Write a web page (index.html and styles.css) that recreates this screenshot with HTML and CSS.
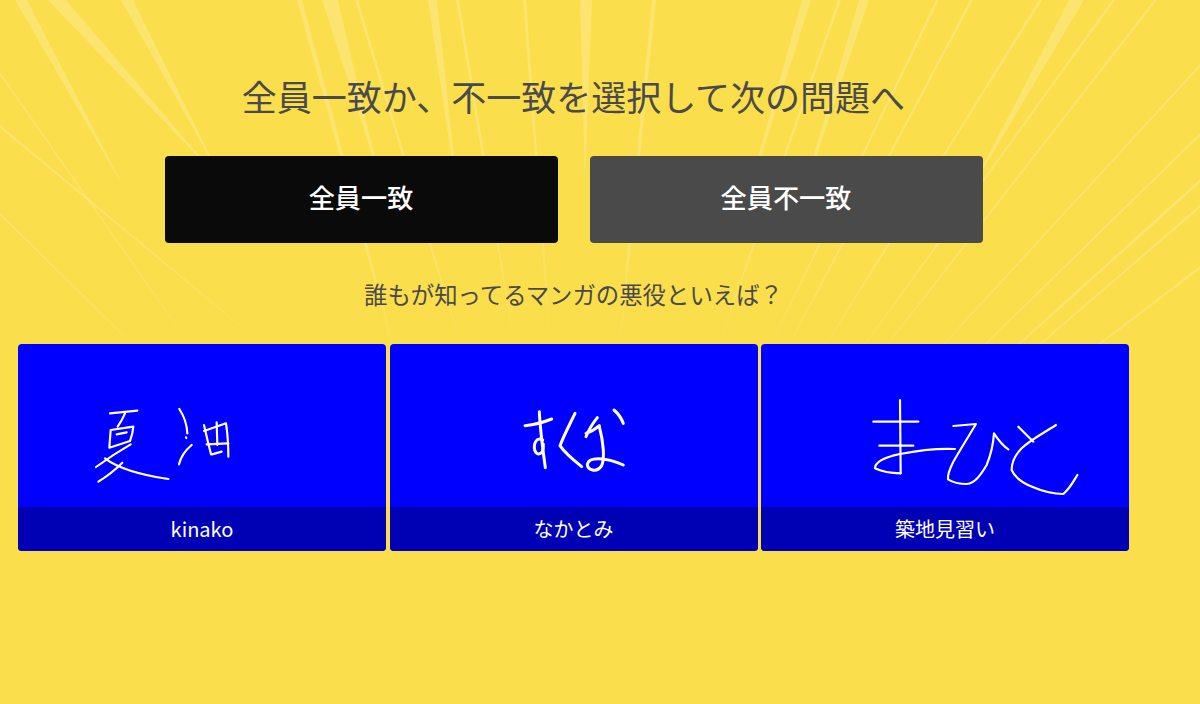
FILE: index.html
```html
<!DOCTYPE html>
<html lang="ja">
<head>
<meta charset="utf-8">
<title>全員一致</title>
<link rel="stylesheet" href="styles.css">
</head>
<body>
<svg class="rays" viewBox="0 0 1200 704" aria-hidden="true">
  <defs>
    <radialGradient id="fade" gradientUnits="userSpaceOnUse" cx="0" cy="0" r="1" gradientTransform="translate(580 740) scale(1500 850)">
      <stop offset="0.45" stop-color="#fff" stop-opacity="0"/>
      <stop offset="0.6" stop-color="#fff" stop-opacity="1"/>
    </radialGradient>
    <mask id="raymask" maskUnits="userSpaceOnUse" x="0" y="0" width="1200" height="704">
      <rect width="1200" height="704" fill="url(#fade)"/>
    </mask>
  </defs>
  <g mask="url(#raymask)" class="ray-group">
    <polygon points="125,190 15,0 27,0"/>
    <polygon points="220,180 48,0 66,0"/>
    <polygon points="222,180 121,0 133,0"/>
    <polygon points="500,740 297,0 302,0"/>
    <polygon points="380,180 322,0 338,0"/>
    <polygon points="580,740 355,0 358,0"/>
    <polygon points="462,230 428,0 437,0"/>
    <polygon points="580,740 456,0 459,0"/>
    <polygon points="580,740 523,0 526,0"/>
    <polygon points="585,180 580,0 592,0"/>
    <polygon points="580,740 652,0 656,0"/>
    <polygon points="735,240 802,0 811,0"/>
    <polygon points="580,740 838,0 841,0"/>
    <polygon points="795,220 859,0 869,0"/>
    <polygon points="580,740 936,0 939,0"/>
    <polygon points="580,740 970,0 973,0"/>
    <polygon points="580,740 1039,0 1042,0"/>
    <polygon points="965,200 1069,0 1084,0"/>
    <polygon points="580,740 1112,0 1115,0"/>
    <polygon points="580,740 1154,0 1157,0"/>
    <polygon points="580,740 1200,64 1200,67"/>
    <polygon points="580,740 1200,133 1200,136"/>
    <polygon points="580,740 1200,179 1200,183"/>
    <polygon points="580,740 1200,205 1200,208"/>
    <polygon points="580,740 1200,266 1200,269"/>
    <polygon points="270,460 0,72 0,75"/>
    <polygon points="330,400 0,125 0,128"/>
    <polygon points="250,460 0,213 0,215"/>
  </g>
</svg>
<main class="page">
  <h1 class="title">全員一致か、不一致を選択して次の問題へ</h1>
  <div class="actions">
    <button class="btn btn-black" type="button">全員一致</button>
    <button class="btn btn-grey" type="button">全員不一致</button>
  </div>
  <p class="question">誰もが知ってるマンガの悪役といえば？</p>
  <div class="answers">
    <article class="card">
      <svg class="drawing" viewBox="-186 -153 1104 489" aria-hidden="true">
        <g class="ink ink-thin">
          <path d="M90 55 L172 47"/>
          <path d="M135 55 Q125 78 113 95"/>
          <path d="M92 105 L160 95 Q158 118 150 138 L88 158 Q90 130 92 105"/>
          <path d="M110 118 L140 112"/>
          <path d="M48 216 Q100 178 152 148"/>
          <path d="M55 260 Q95 235 127 203"/>
          <path d="M75 190 Q130 232 265 252"/>
          <path d="M298 42 Q320 75 322 115"/>
          <path d="M318 127 L319 129"/>
          <path d="M335 150 Q305 175 297 208"/>
          <path d="M372 90 Q382 135 393 178"/>
          <path d="M372 108 L438 85 Q445 130 445 185"/>
          <path d="M410 82 L412 150"/>
          <path d="M380 148 L445 145"/>
          <path d="M396 178 L425 170"/>
        </g>
      </svg>
      <div class="name">kinako</div>
    </article>
    <article class="card">
      <svg class="drawing" viewBox="-360 -153 1104 489" aria-hidden="true">
        <g class="ink ink-bold">
          <path d="M45 92 Q85 88 125 72"/>
          <path d="M88 50 C90 100 98 160 106 218"/>
          <path d="M98 135 C80 125 70 145 74 165 C80 185 102 180 100 148"/>
          <path d="M195 55 C178 90 160 125 150 152 C165 175 190 195 215 215"/>
          <path d="M262 68 Q240 95 228 125"/>
          <path d="M228 115 Q250 108 268 92"/>
          <path d="M312 45 Q330 60 340 85"/>
          <path d="M268 95 C280 140 285 190 275 212 C260 235 232 225 232 208 C235 185 285 185 340 210"/>
        </g>
      </svg>
      <div class="name">なかとみ</div>
    </article>
    <article class="card">
      <svg class="drawing" viewBox="-297 -138 1104 489" aria-hidden="true">
        <g class="ink ink-thin">
          <path d="M40 95 L175 95"/>
          <path d="M58 167 L160 167"/>
          <path d="M120 30 L122 250"/>
          <path d="M122 250 C90 250 65 245 45 235 C45 215 80 200 120 192 C180 180 240 175 285 177"/>
          <path d="M280 108 L348 102 C325 140 300 180 280 215 C270 235 262 255 264 268 C280 278 300 282 320 282 C345 280 362 255 380 225 C392 195 400 160 402 130 C415 150 430 168 445 178"/>
          <path d="M475 110 L520 155"/>
          <path d="M588 105 C550 130 510 150 485 175 C465 195 455 215 455 240 C465 265 490 280 520 292 C550 305 585 312 610 312 C630 295 640 275 652 255"/>
        </g>
      </svg>
      <div class="name">築地見習い</div>
    </article>
  </div>
</main>
</body>
</html>
```

FILE: styles.css
```css
html, body {
  margin: 0;
  height: 100%;
}

body {
  position: relative;
  height: 704px;
  overflow: hidden;
  background: #fbde4c;
  font-family: "Noto Sans CJK JP", "Noto Sans", sans-serif;
  color: #4a4a4a;
}

.rays {
  position: absolute;
  inset: 0;
  width: 1200px;
  height: 704px;
}

.ray-group polygon {
  fill: #fff;
  fill-opacity: 0.2;
}

.page {
  position: relative;
  box-sizing: border-box;
  width: 1111px;
  margin-left: 18px;
  padding-top: 70px;
  display: flex;
  flex-direction: column;
  align-items: center;
}

.title {
  margin: 0;
  font-size: 35px;
  line-height: 52px;
  font-weight: 400;
  white-space: nowrap;
}

.actions {
  display: flex;
  gap: 32px;
  margin-top: 33.5px;
}

.btn {
  width: 393px;
  height: 87.5px;
  padding: 0 0 5px;
  border: 0;
  border-radius: 4px;
  color: #fff;
  font-family: inherit;
  font-size: 26.2px;
  font-weight: 500;
}

.btn-black {
  background: #0a0a0a;
}

.btn-grey {
  background: #4a4a4a;
}

.question {
  margin: 33.5px 0 0;
  font-size: 23.4px;
  line-height: 34px;
  font-weight: 400;
  white-space: nowrap;
}

.answers {
  display: grid;
  grid-template-columns: repeat(3, 368px);
  gap: 3.5px;
  margin-top: 33px;
}

.card {
  display: flex;
  flex-direction: column;
  height: 207px;
  border-radius: 4px;
  overflow: hidden;
  background: #0000ff;
}

.drawing {
  display: block;
  width: 368px;
  height: 163px;
}

.ink {
  fill: none;
  stroke: #fff;
  stroke-linecap: round;
  stroke-linejoin: round;
}

.ink-thin {
  stroke-width: 6.5;
}

.ink-bold {
  stroke-width: 9;
}

.name {
  flex: 1;
  display: flex;
  align-items: center;
  justify-content: center;
  background: #0000b4;
  color: #fff;
  font-size: 20px;
  font-weight: 400;
}
```
